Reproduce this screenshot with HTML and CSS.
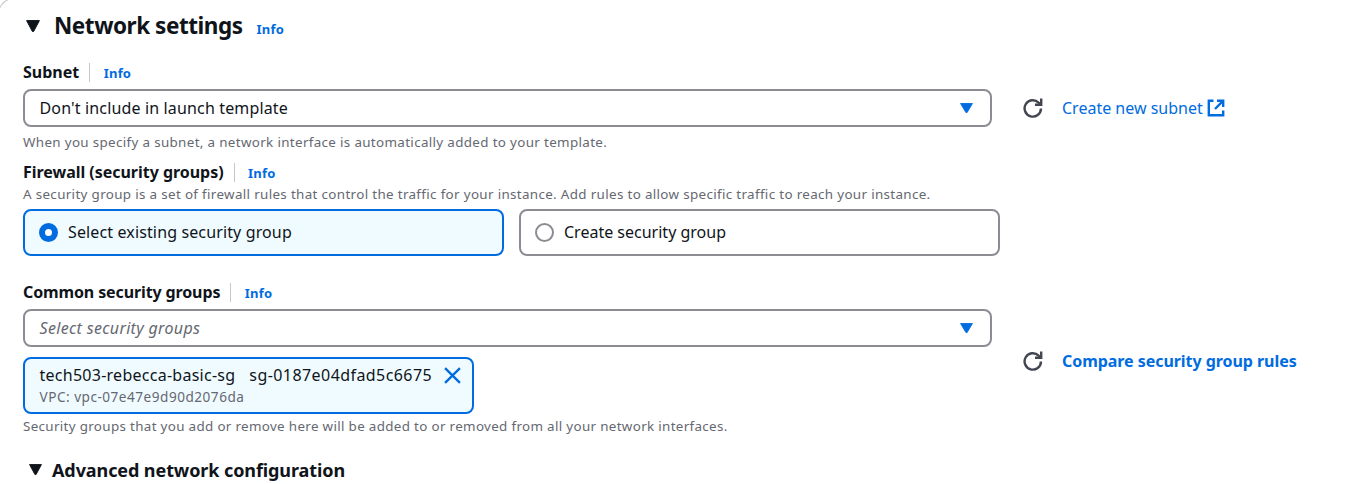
FILE: index.html
```html
<!DOCTYPE html>
<html lang="en">
<head>
<meta charset="utf-8">
<title>Network settings</title>
<link rel="stylesheet" href="styles.css">
</head>
<body>
<svg class="sprite" width="0" height="0" aria-hidden="true">
  <symbol id="caret" viewBox="0 0 14 12" preserveAspectRatio="none"><path d="M.6 .6h12.8L7.6 11.5h-1.2z" fill="currentColor" stroke="currentColor" stroke-linejoin="round"/></symbol>
  <symbol id="refresh" viewBox="0 0 20 20"><path d="M18 10.5A8.2 8.2 0 1 1 15.6 4.6L18 6.6" fill="none" stroke="currentColor" stroke-width="2.4"/><path d="M18.2 .6V6.7H12" fill="none" stroke="currentColor" stroke-width="2.4"/></symbol>
  <symbol id="external" viewBox="0 0 18 18"><path d="M6.5 1.8H1.8v14.4h14.4v-4.7M10 1.8h6.2v6.2M15.8 2.2L8 10" fill="none" stroke="currentColor" stroke-width="2.4"/></symbol>
</svg>
<main class="panel">
  <header class="panel-header">
    <svg class="caret-title"><use href="#caret"/></svg>
    <h2 class="title">Network settings</h2>
    <a class="info">Info</a>
  </header>

  <section class="field field-subnet">
    <div class="label-row"><span class="label label-subnet">Subnet</span><a class="info">Info</a></div>
    <div class="control-row">
      <div class="select"><span class="value">Don't include in launch template</span><svg class="caret-select"><use href="#caret"/></svg></div>
      <svg class="refresh"><use href="#refresh"/></svg>
      <a class="link">Create new subnet</a>
      <svg class="external"><use href="#external"/></svg>
    </div>
    <p class="hint hint-subnet">When you specify a subnet, a network interface is automatically added to your template.</p>
  </section>

  <section class="field field-firewall">
    <div class="label-row"><span class="label label-firewall">Firewall (security groups)</span><a class="info">Info</a></div>
    <p class="hint hint-firewall">A security group is a set of firewall rules that control the traffic for your instance. Add rules to allow specific traffic to reach your instance.</p>
    <div class="tiles">
      <div class="tile tile-selected"><span class="radio radio-on"></span><span class="tile-select">Select existing security group</span></div>
      <div class="tile"><span class="radio"></span><span class="tile-create">Create security group</span></div>
    </div>
  </section>

  <section class="field field-groups">
    <div class="label-row"><span class="label label-groups">Common security groups</span><a class="info">Info</a></div>
    <div class="groups-row">
      <div class="groups-main">
        <div class="select"><span class="placeholder">Select security groups</span><svg class="caret-select"><use href="#caret"/></svg></div>
        <div class="token">
          <div class="token-text">
            <div class="token-line"><span class="token-name">tech503-rebecca-basic-sg</span><span class="token-id">sg-0187e04dfad5c6675</span></div>
            <div class="token-vpc">VPC: vpc-07e47e9d90d2076da</div>
          </div>
          <svg class="close" viewBox="0 0 16 16"><path d="M1 1L15 15M15 1L1 15" fill="none" stroke="currentColor" stroke-width="2.2"/></svg>
        </div>
      </div>
      <svg class="refresh"><use href="#refresh"/></svg>
      <a class="link link-bold">Compare security group rules</a>
    </div>
    <p class="hint hint-groups">Security groups that you add or remove here will be added to or removed from all your network interfaces.</p>
  </section>

  <div class="advanced"><svg class="caret-advanced"><use href="#caret"/></svg><h3 class="advanced-title">Advanced network configuration</h3></div>
</main>
</body>
</html>
```
FILE: styles.css
```css
* { box-sizing: border-box; }
body { margin: 0; background: #fff; color: #0f141a; font: 16px/20px "Noto Sans", "Open Sans", sans-serif; }
h2, h3, p { margin: 0; }
svg { display: block; flex: none; }
.sprite { position: absolute; }
.panel { height: 485px; margin: -2px 0 0 -2px; padding: 1px 0 0 24px; border: 1px solid #c6c6cd; border-width: 1px 0 0 1px; border-radius: 16px 0 0 0; white-space: nowrap; }

.panel-header { display: flex; height: 52px; padding-left: 3px; }
.caret-title { width: 14px; height: 12px; margin-top: 20px; }
.title { margin-left: 14px; font-size: 22.5px; line-height: 52px; font-weight: 700; letter-spacing: -.45px; }
.info { color: #006ce0; font-size: 13px; font-weight: 700; letter-spacing: .2px; }
.panel-header .info { margin-left: 14px; line-height: 58px; }

.field-subnet { margin-top: 10px; }
.label-row { display: flex; align-items: center; height: 20px; }
.label { font-weight: 700; font-size: 16px; }
.label-groups { letter-spacing: -.12px; }
.label-firewall { letter-spacing: -.03px; }
.label-row .info { margin-left: 10px; padding-left: 13.5px; line-height: 20px; border-left: 1px solid #c6c6cd; height: 19px; }
.control-row { display: flex; align-items: center; margin-top: 7px; }
.select { display: flex; align-items: center; justify-content: space-between; width: 969px; height: 38px; padding: 0 17px 0 14.5px; border: 2px solid #8c8c94; border-radius: 8px; }
.value { letter-spacing: .15px; }
.caret-select { width: 13px; height: 10px; margin-bottom: 1px; color: #006ce0; }
.refresh { width: 20px; height: 20px; margin-left: 31px; color: #424650; }
.link { margin-left: 19px; color: #006ce0; }
.external { width: 18px; height: 18px; margin-left: 4px; color: #006ce0; }
.hint { color: #656871; font-size: 13.4px; line-height: 18px; letter-spacing: .34px; }
.hint-subnet { margin-top: 6px; }

.field-firewall { margin-top: 11px; }
.hint-firewall { margin-top: 3px; }
.tiles { display: grid; grid-template-columns: 481px 481px; gap: 15px; margin-top: 6px; }
.tile { display: flex; align-items: center; height: 47px; padding-left: 14px; gap: 10px; border: 2px solid #8c8c94; border-radius: 8px; }
.tile-selected { background: #f0fbff; border-color: #006ce0; }
.tile-select, .tile-create { padding-bottom: 1px; }
.tile-select { letter-spacing: .13px; }
.radio { width: 19px; height: 19px; border: 2px solid #8c8c94; border-radius: 50%; background: #fff; }
.radio-on { border: 6px solid #006ce0; }

.field-groups { margin-top: 26px; }
.groups-row { display: flex; align-items: center; margin-top: 7px; }
.placeholder { color: #656871; font-style: italic; letter-spacing: .33px; }
.token { display: flex; width: 451px; height: 57px; margin-top: 10px; padding: 6px 10px 0 14.5px; justify-content: space-between; background: #f0fbff; border: 2px solid #006ce0; border-radius: 8px; }
.token-line { display: flex; gap: 14px; }
.token-name { letter-spacing: .26px; }
.token-id { letter-spacing: .43px; }
.token-vpc { margin-top: 3px; color: #656871; font-size: 13.6px; line-height: 18px; letter-spacing: .5px; }
.close { width: 17px; height: 17px; margin: 2px 1px 0 0; color: #006ce0; }
.groups-row > .refresh, .groups-row > .link { margin-bottom: 2px; }
.link-bold { font-weight: 700; letter-spacing: -.05px; }
.hint-groups { margin-top: 3px; letter-spacing: .33px; }
.advanced { display: flex; align-items: center; height: 24px; margin-top: 23px; padding-left: 6px; }
.caret-advanced { width: 13px; height: 11px; margin-bottom: 1px; }
.advanced-title { margin-left: 10px; font-size: 18px; line-height: 24px; font-weight: 700; letter-spacing: -.09px; }
```
